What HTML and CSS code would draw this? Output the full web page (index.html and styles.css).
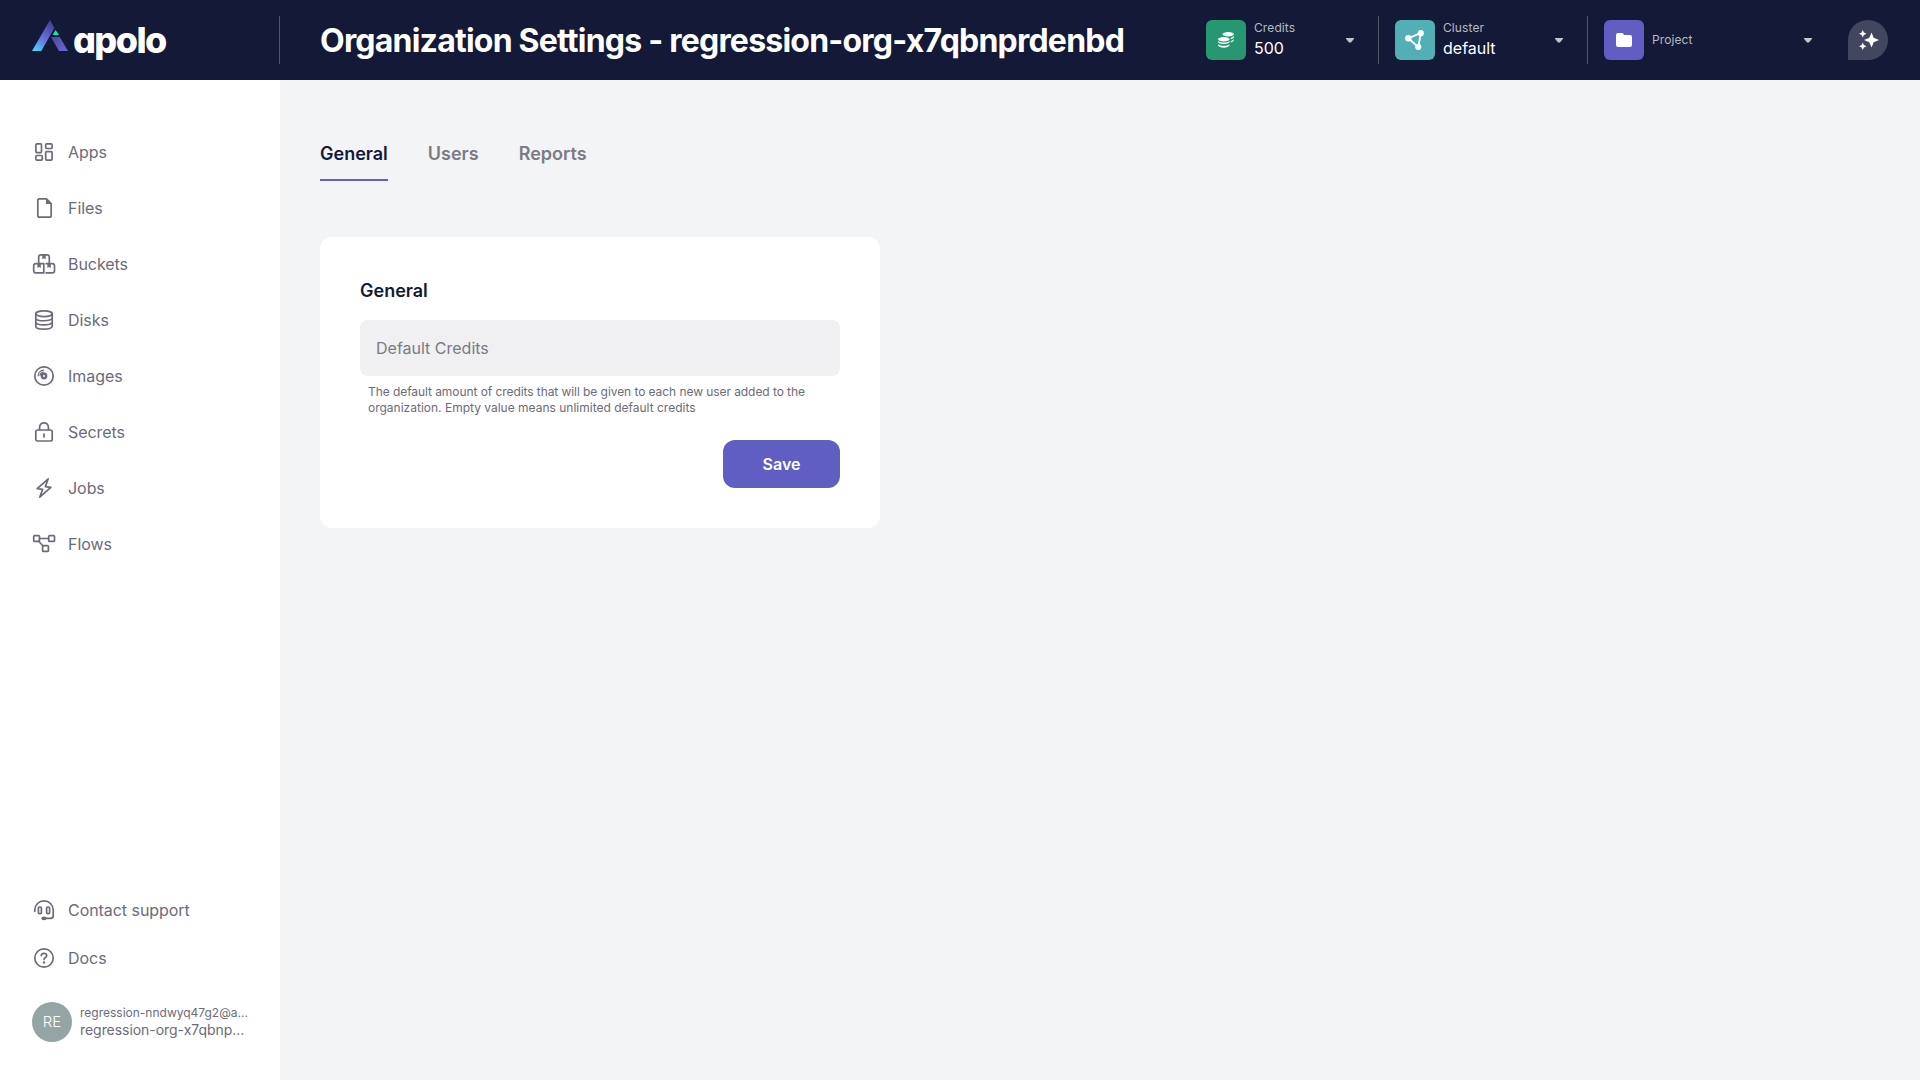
FILE: index.html
```html
<!DOCTYPE html>
<html lang="en">
<head>
<meta charset="utf-8">
<title>Organization Settings</title>
<link rel="stylesheet" href="styles.css">
</head>
<body>
<header class="topbar">
  <div class="brand">
    <svg class="brand-mark" width="36" height="31" viewBox="0 0 36 31">
      <defs>
        <linearGradient id="leg" x1="0.1" y1="1" x2="0.7" y2="0"><stop offset="0" stop-color="#42dcff"/><stop offset=".45" stop-color="#6a73d9"/><stop offset="1" stop-color="#4540a0"/></linearGradient>
        <linearGradient id="foot" x1="0" y1="0" x2="1" y2="1"><stop offset="0" stop-color="#4a46a8"/><stop offset="1" stop-color="#6a68d2"/></linearGradient>
      </defs>
      <path d="M18 0L22.4 8L9.3 31H0Z" fill="url(#leg)"/>
      <path d="M23.6 10L27 15H20.6Z" fill="#00f5a8"/>
      <path d="M19 17H27.8L36 31H27Z" fill="url(#foot)"/>
    </svg>
    <span class="brand-name">apolo</span>
  </div>
  <h1 class="page-title">Organization Settings - regression-org-x7qbnprdenbd</h1>
  <div class="pickers">
    <div class="picker credits">
      <span class="tile green"><svg width="16" height="16" viewBox="0 0 16 16" fill="#fff"><ellipse cx="10.2" cy="2.3" rx="5.8" ry="2.2"/><path d="M12.6 5.9C14 5.6 15.300 5 16 4.100V5.300C15.600 6.400 14.200 7 12.700 7.300ZM12.800 9C14.200 8.600 15.400 8.100 16 7.200V8.300C15.500 9.400 14.300 10 12.800 10.400Z"/><ellipse cx="5.800" cy="7.200" rx="5.800" ry="2.200"/><path d="M0 9C2.500 11 9.100 11 11.600 9V10C10.500 12.700 1.100 12.700 0 10ZM0 12.300C2.500 14.300 9.100 14.300 11.600 12.300V13.300C10.500 16.600 1.100 16.600 0 13.300Z"/></svg></span>
      <span class="picker-text"><small>Credits</small><b>500</b></span>
      <i class="caret"></i>
    </div>
    <div class="picker cluster">
      <span class="tile teal"><svg width="20" height="20" viewBox="0 0 20 20" fill="#fff"><path d="M3.300 8.300L15.800 3L13.300 17.200Z" fill="none" stroke="#fff" stroke-width="1.900"/><circle cx="3.300" cy="8.300" r="3.200"/><circle cx="15.800" cy="3.200" r="3.100"/><circle cx="13.300" cy="17" r="3.100"/></svg></span>
      <span class="picker-text"><small>Cluster</small><b>default</b></span>
      <i class="caret"></i>
    </div>
    <div class="picker project">
      <span class="tile violet"><svg width="16" height="14" viewBox="0 0 16 14" fill="#fff"><path d="M2 0H6Q6.800 0 7.200.6L8 2H14Q16 2 16 4V12Q16 14 14 14H2Q0 14 0 12V2Q0 0 2 0Z"/></svg></span>
      <span class="picker-text"><small>Project</small></span>
      <i class="caret"></i>
    </div>
  </div>
  <div class="assistant"><svg width="20" height="20" viewBox="0 0 20 20" fill="#fff"><path d="M12.500 2.500L14.700 7.800L20 10L14.700 12.200L12.500 17.500L10.300 12.200L5 10L10.300 7.800ZM3.750 0L4.900 2.600L7.500 3.750L4.900 4.900L3.750 7.500L2.600 4.900L0 3.750L2.600 2.600ZM3.750 12.500L4.900 15.100L7.500 16.250L4.900 17.400L3.750 20L2.600 17.400L0 16.250L2.600 15.100Z"/></svg></div>
</header>
<div class="layout">
  <aside class="sidebar">
    <nav class="menu">
      <a><svg viewBox="0 0 24 24"><rect x="3.900" y="3.900" width="5.600" height="8.700" rx="1"/><rect x="13.700" y="3.900" width="6.400" height="4.600" rx="1"/><rect x="3.900" y="15.500" width="6.400" height="4.600" rx="1"/><rect x="13.700" y="11.600" width="6.400" height="8.500" rx="1"/></svg>Apps</a>
      <a><svg viewBox="0 0 24 24"><path d="M7.500 2.800H14.500L19.200 7.500V19.500Q19.200 21.200 17.500 21.200H7.500Q5.800 21.200 5.800 19.500V4.500Q5.800 2.800 7.500 2.800Z"/><path class="solid" d="M14 2.500L19.500 8H14Z"/></svg>Files</a>
      <a><svg viewBox="0 0 24 24"><path d="M6.700 10.500V5Q6.700 2.800 8.900 2.800H15.100Q17.300 2.800 17.300 5V10.500M3.900 11.700H11.800V20.900H3.900Q1.700 20.900 1.700 18.700V13.900Q1.700 11.700 3.900 11.700ZM14.200 11.700H20.300Q22.500 11.700 22.500 13.900V18.700Q22.500 20.900 20.300 20.900H14.200"/><path class="solid" d="M10.300 3H13.700V7.200L12 6.200L10.300 7.200ZM5.400 12H8.800V16L7.100 15.100L5.400 16ZM15.400 12H18.800V16L17.100 15.100L15.400 16Z"/></svg>Buckets</a>
      <a><svg viewBox="0 0 24 24"><ellipse cx="12" cy="5.700" rx="8.200" ry="2.900"/><path d="M3.800 5.700V18.200C3.800 22.200 20.200 22.200 20.200 18.200V5.700M3.800 9.900C3.800 13.700 20.200 13.700 20.200 9.900M3.800 14.100C3.800 17.900 20.200 17.900 20.200 14.100"/></svg>Disks</a>
      <a><svg viewBox="0 0 24 24"><circle cx="12" cy="12" r="9.200"/><circle class="hub" cx="12" cy="12" r="2.200"/><path class="thin" d="M6.100 11.800A6 6 0 0 1 11.600 6.100M8 11.500A4 4 0 0 1 11.300 8"/></svg>Images</a>
      <a><svg viewBox="0 0 24 24"><rect x="3.800" y="10" width="16.400" height="11" rx="1.800"/><path d="M7.600 10V7.200C7.600 1.400 16.400 1.400 16.400 7.200V10M12 14V17"/></svg>Secrets</a>
      <a><svg viewBox="0 0 24 24"><path d="M16.200 2.800L5.200 12.700L10.600 13.400L7.800 21.200L18.800 11.300L13.400 10.600Z"/></svg>Jobs</a>
      <a><svg viewBox="0 0 24 24"><rect x="1.700" y="3.600" width="5.800" height="5.800" rx="1"/><rect x="16.700" y="3.600" width="5.800" height="5.800" rx="1"/><rect x="10.600" y="13.600" width="5.800" height="5.800" rx="1"/><path d="M7.500 6.500H16.700M6.700 9.200L11 14"/></svg>Flows</a>
    </nav>
    <div class="bottom">
      <nav class="help">
        <a><svg viewBox="0 0 24 24"><path d="M2.800 13.300V12A9.200 9.200 0 0 1 21.200 12V18Q21.200 20.300 18.900 20.300H12"/><rect x="6.400" y="9" width="3" height="6.600" rx="1.200"/><rect x="14.600" y="9" width="3" height="6.600" rx="1.200"/><ellipse class="solid" cx="12" cy="20.400" rx="2.600" ry="1.800"/></svg>Contact support</a>
        <a><svg viewBox="0 0 24 24"><circle cx="12" cy="12" r="9.200"/><path d="M9.300 9.600C9.400 6.700 14.700 6.700 14.700 9.700C14.700 11.500 12 11.500 12 13.400"/><circle class="solid" cx="12" cy="16.500" r="1.200"/></svg>Docs</a>
      </nav>
      <div class="account">
        <span class="avatar">RE</span>
        <div class="account-text"><span class="email">regression-nndwyq47g2@a...</span><span class="org">regression-org-x7qbnp...</span></div>
      </div>
    </div>
  </aside>
  <main class="content">
    <nav class="tabs"><a class="active">General</a><a>Users</a><a>Reports</a></nav>
    <form class="card">
      <h2>General</h2>
      <input class="field" placeholder="Default Credits">
      <p class="hint"><span class="hint-lead">The default amount of credits that will be given to each new user added to the</span> organization. Empty value means unlimited default credits</p>
      <button class="save" type="button">Save</button>
    </form>
  </main>
</div>
</body>
</html>
```
FILE: styles.css
```css
* { box-sizing: border-box; }
body { margin: 0; height: 100vh; display: flex; flex-direction: column; overflow: hidden; font-family: Inter, sans-serif; font-size: 16px; line-height: 24px; color: #6c6b79; background: #f3f4f6; }
h1, h2, p { margin: 0; }
.topbar { height: 80px; flex: none; display: flex; align-items: center; background: #131937; color: #fff; }
.brand { width: 280px; height: 48px; padding-left: 32px; display: flex; align-items: center; border-right: 1px solid #50556a; }
.brand-mark { flex: none; margin-top: -9px; }
.brand-name { margin: -1px 0 0 5px; font-size: 36px; line-height: 40px; font-weight: 800; letter-spacing: -1.6px; font-feature-settings: "cv11"; }
.page-title { margin-left: 40px; padding-top: 1px; font-size: 32px; line-height: 40px; font-weight: 700; letter-spacing: -0.78px; white-space: nowrap; }
.pickers { margin-left: auto; display: flex; }
.picker { height: 48px; display: flex; align-items: center; }
.credits { width: 172px; }
.cluster { width: 209px; padding-left: 16px; border-left: 1px solid #50556a; }
.project { width: 225px; padding-left: 16px; border-left: 1px solid #50556a; }
.tile { width: 40px; height: 40px; flex: none; display: flex; align-items: center; justify-content: center; border-radius: 6px; }
.green { background: #269771; }
.teal { background: #51afb5; }
.violet { background: #605dc3; }
.picker-text { margin-left: 8px; display: flex; flex-direction: column; }
.picker-text small { font-size: 12px; line-height: 16px; letter-spacing: 0.1px; color: #b8bac3; }
.picker-text b { font-size: 16px; line-height: 24px; font-weight: 400; }
.caret { margin-left: auto; width: 8px; height: 5px; background: #c4c4cb; clip-path: polygon(0 0, 100% 0, 100% 25%, 62% 100%, 38% 100%, 0 25%); }
.credits .caret { margin-right: 24px; }
.cluster .caret { margin-right: 24px; }
.assistant { width: 40px; height: 40px; margin: 0 32px 0 36px; padding-left: 2px; display: flex; align-items: center; justify-content: center; border-radius: 20px 20px 20px 0; background: #42475f; }
.layout { flex: 1; display: flex; min-height: 0; }
.sidebar { width: 280px; padding: 44px 0 38px 32px; display: flex; flex-direction: column; justify-content: space-between; background: #fff; }
.menu, .help { display: flex; flex-direction: column; }
.menu a, .help a { display: flex; align-items: center; gap: 12px; height: 56px; letter-spacing: -0.05px; }
.help a { height: 48px; }
.sidebar svg { width: 24px; height: 24px; flex: none; fill: none; stroke: #6c6b79; stroke-width: 1.7; stroke-linejoin: round; stroke-linecap: round; }
.sidebar .solid { fill: #6c6b79; stroke: none; }
.sidebar .hub { stroke-width: 2.4; }
.sidebar .thin { stroke-width: 1.2; }
.account { display: flex; align-items: center; gap: 8px; margin-top: 20px; }
.avatar { width: 40px; height: 40px; flex: none; border-radius: 50%; display: flex; align-items: center; justify-content: center; background: #95a5a6; color: #fff; font-size: 15px; font-weight: 300; }
.account-text { display: flex; flex-direction: column; }
.email, .org { white-space: nowrap; font-size: 12px; line-height: 16px; }
.org { font-size: 14px; line-height: 18px; letter-spacing: -0.05px; }
.content { flex: 1; padding: 60px 40px; }
.tabs { display: flex; gap: 40px; font-size: 18px; line-height: 28px; font-weight: 600; color: #7b7a86; }
.tabs a { height: 41px; border-bottom: 2px solid transparent; }
.tabs .active { color: #131937; border-color: #605dc3; }
.card { width: 560px; height: 291px; margin-top: 56px; padding: 40px; display: flex; flex-direction: column; border-radius: 12px; background: #fff; }
.card h2 { font-size: 18px; line-height: 28px; font-weight: 600; color: #131937; }
.field { flex: none; width: 480px; height: 56px; margin-top: 15px; padding: 0 16px; border: 0; border-radius: 8px; background: #f0f0f2; font: inherit; }
.field::placeholder { color: #7b7a86; opacity: 1; }
.hint { margin-top: 8px; padding: 0 8px; font-size: 12px; line-height: 16px; }
.hint-lead { letter-spacing: -0.07px; }
.save { align-self: flex-end; flex: none; width: 117px; height: 48px; margin-top: 24px; border: 0; border-radius: 12px; background: #605dc3; color: #fff; font: 600 16px/24px Inter, sans-serif; }
```
